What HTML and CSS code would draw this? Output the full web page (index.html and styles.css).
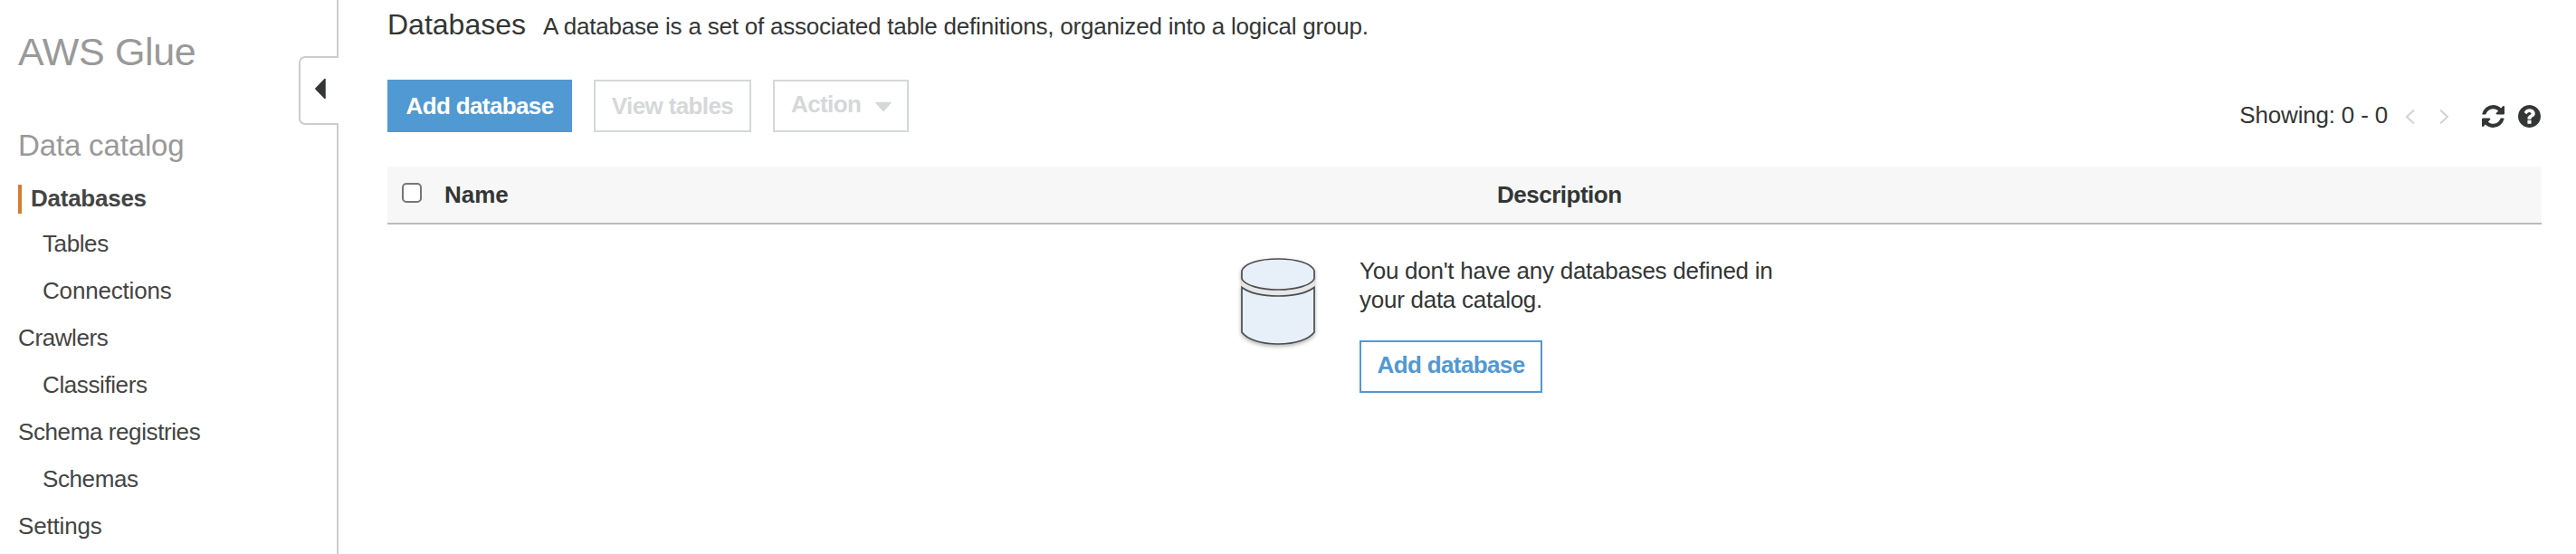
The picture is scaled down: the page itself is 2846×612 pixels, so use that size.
FILE: index.html
```html
<!DOCTYPE html>
<html lang="en">
<head>
<meta charset="utf-8">
<title>AWS Glue</title>
<link rel="stylesheet" href="styles.css">
</head>
<body>
<div class="app">
  <aside class="sidebar">
    <h1 class="product">AWS Glue</h1>
    <h2 class="section">Data catalog</h2>
    <nav class="nav">
      <a class="nav-item active">Databases</a>
      <a class="nav-item sub">Tables</a>
      <a class="nav-item sub loose">Connections</a>
      <a class="nav-item">Crawlers</a>
      <a class="nav-item sub">Classifiers</a>
      <a class="nav-item">Schema registries</a>
      <a class="nav-item sub">Schemas</a>
      <a class="nav-item loose">Settings</a>
    </nav>
    <button class="collapse" aria-label="Collapse">
      <svg width="14" height="24" viewBox="0 0 14 24"><path d="M12 1.6 1.8 12 12 22.4Z" fill="#333635" stroke="#333635" stroke-width="1.5" stroke-linejoin="round"/></svg>
    </button>
  </aside>
  <main class="main">
    <header class="heading">
      <span class="title">Databases</span>
      <span class="desc">A database is a set of associated table definitions, organized into a logical group.</span>
    </header>
    <div class="toolbar">
      <button class="btn primary">Add database</button>
      <button class="btn disabled">View tables</button>
      <button class="btn disabled action"><span class="action-label">Action</span>
        <svg class="caret" width="20" height="12" viewBox="0 0 20 12"><path d="M2 1.500H18L10 10.500Z" fill="#d5d8d8" stroke="#d5d8d8" stroke-width="1.4" stroke-linejoin="round"/></svg>
      </button>
      <div class="pager">
        <span class="showing">Showing: 0 - 0</span>
        <svg class="prev" width="12" height="18" viewBox="0 0 12 18"><path d="M10 1.500 2 9l8 7.500" fill="none" stroke="#d2d4d4" stroke-width="2"/></svg>
        <svg class="next" width="12" height="18" viewBox="0 0 12 18"><path d="M2 1.500 10 9l-8 7.500" fill="none" stroke="#d2d4d4" stroke-width="2"/></svg>
        <svg class="refresh" width="25" height="25" viewBox="0 0 1536 1536"><path fill="#333635" d="M1511 928q0 5-1 7-64 268-268 434.500T764 1536q-146 0-282.500-55T238 1324l-129 129q-19 19-45 19t-45-19-19-45V960q0-26 19-45t45-19h448q26 0 45 19t19 45-19 45l-137 137q71 66 161 102t187 36q134 0 250-65t186-179q11-17 53-117 8-23 30-23h192q13 0 22.500 9.500t9.500 22.500zm25-800v448q0 26-19 45t-45 19h-448q-26 0-45-19t-19-45 19-45l138-138Q969 256 768 256q-134 0-250 65T332 500q-11 17-53 117-8 23-30 23H50q-13 0-22.500-9.500T18 608v-7q65-268 270-434.500T768 0q146 0 284 55.500T1297 212l130-129q19-19 45-19t45 19 19 45z"/></svg>
        <svg class="help" width="25" height="25" viewBox="0 0 1536 1536"><path fill="#333635" d="M896 1248v-192q0-14-9-23t-23-9H672q-14 0-23 9t-9 23v192q0 14 9 23t23 9h192q14 0 23-9t9-23zm256-672q0-88-55.500-163t-138.500-116-170-41q-243 0-371 213-15 24 8 42l132 100q7 6 19 6 16 0 25-12 53-68 86-92 34-24 86-24 48 0 85.500 26t37.500 59q0 38-20 61t-68 45q-63 28-115.500 86.500T640 892v36q0 14 9 23t23 9h192q14 0 23-9t9-23q0-19 21.500-49.500T972 829q32-18 49-28.500t46-35 44.500-48 28-60.500 12.500-81zm384 192q0 209-103 385.500T1153.500 1433 768 1536t-385.500-103T103 1153.500 0 768t103-385.500T382.500 103 768 0t385.500 103T1433 382.500 1536 768z"/></svg>
      </div>
    </div>
    <div class="thead">
      <span class="checkbox" role="checkbox" aria-checked="false"></span>
      <span class="col-name">Name</span>
      <span class="col-desc">Description</span>
    </div>
    <section class="empty">
      <svg class="db" width="98" height="110" viewBox="0 0 98 110">
        <g class="db-shape" fill="#e7eff9" stroke="#4b4e4e" stroke-width="1.7">
          <path fill="#e6e6e6" stroke="none" d="M9 30V40Q49 58 89 40V30Z"/>
          <path d="M9 37.500C18 44 32 47 49 47s31-3 40-9.500V87C83 95 68 100 49 100S15 95 9 87Z"/>
          <path d="M9 19C12 11 28 6 49 6s37 5 40 13v9C86 35 69 40 49 40S12 35 9 28Z"/>
        </g>
      </svg>
      <div class="empty-body">
        <p class="empty-text">You don't have any databases defined in<br>your data catalog.</p>
        <button class="btn outline">Add database</button>
      </div>
    </section>
  </main>
</div>
</body>
</html>
```

FILE: styles.css
```css
* { box-sizing: border-box; }
body { margin: 0; background: #fff; color: #333635; font: 26px "Liberation Sans", Arial, sans-serif; }
h1, h2, p { margin: 0; font-weight: 400; }
button { font-family: inherit; margin: 0; }
svg { display: block; flex: none; }
.app { display: flex; width: 2846px; height: 612px; overflow: hidden; white-space: nowrap; }

.sidebar { position: relative; flex: none; width: 374px; padding: 27px 0 0 20px; border-right: 2px solid #ccc; color: #444; }
.product { font-size: 43px; line-height: 60px; letter-spacing: -0.35px; color: #999; }
.section { margin-top: 54px; font-size: 33px; line-height: 40px; letter-spacing: -0.15px; color: #999; }
.nav { display: flex; flex-direction: column; margin-top: 23px; }
.nav-item { line-height: 52px; letter-spacing: -0.4px; }
.nav-item.sub { padding-left: 27px; }
.nav-item.loose { letter-spacing: -0.18px; }
.nav-item.active { height: 32px; margin-bottom: 7px; padding-left: 10px; border-left: 4px solid #d17d2f; font-weight: 700; line-height: 30px; letter-spacing: -0.25px; }
/* Tab that sits over the sidebar's right border */
.collapse { position: absolute; top: 62px; right: -2px; display: flex; align-items: center; width: 44px; height: 76px; padding: 0 0 4px 15px; border: 2px solid #ccc; border-right: 0; border-radius: 7px 0 0 7px; background: #fff; }

.main { flex: 1; padding: 0 38px 0 54px; }
.heading { display: flex; align-items: baseline; gap: 19px; height: 88px; line-height: 54px; }
.title { font-size: 32px; }
.desc { letter-spacing: -0.21px; }
.toolbar { display: flex; height: 96px; align-items: flex-start; gap: 24px; }
.btn { flex: none; height: 58px; padding: 0; border: 2px solid; background: #fff; font-size: 26px; font-weight: 700; line-height: 54px; letter-spacing: -0.62px; text-align: center; }
.primary { width: 204px; border-color: #5199d3; background: #5199d3; color: #fff; }
.disabled { width: 174px; border-color: #d5d8d8; color: #d5d8d8; }
.action { display: flex; align-items: center; width: 150px; padding: 0 16px 0 18px; justify-content: space-between; line-height: 50px; }
.action-label { padding-bottom: 4px; }
.caret { margin-top: 1px; }
.pager { display: flex; align-items: center; margin-left: auto; height: 80px; }
.showing { padding-bottom: 2px; letter-spacing: -0.18px; }
.prev { margin: 2px 0 0 19px; }
.next { margin: 2px 0 0 25px; }
.refresh { margin-left: 36px; }
.help { margin: 0 1px 0 15px; }

.thead { display: flex; align-items: center; height: 64px; padding-left: 16px; border-bottom: 2px solid #bbb; background: #f7f7f7; font-weight: 700; }
.checkbox { width: 22px; height: 22px; margin-bottom: 4px; border: 2px solid #767676; border-radius: 5px; background: #fff; }
.col-name { width: 1163px; margin-left: 25px; }
.col-desc { letter-spacing: -0.5px; }

.empty { display: flex; padding: 35px 0 0 935px; }
.db-shape { filter: drop-shadow(0 2px 2px rgba(0, 0, 0, .3)); }
.db { margin-top: -3px; }
.empty-body { margin-left: 41px; }
.empty-text { line-height: 32px; letter-spacing: -0.26px; }
.outline { width: 202px; margin-top: 29px; border-color: #5199d3; color: #5199d3; line-height: 50px; padding-bottom: 4px; }
```
